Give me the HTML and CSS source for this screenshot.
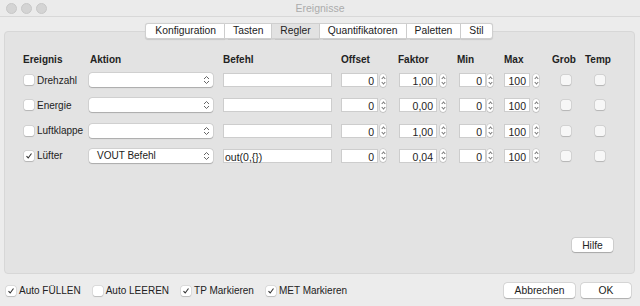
FILE: index.html
```html
<!DOCTYPE html>
<html lang="de">
<head>
    <meta charset="UTF-8">
    <title>Ereignisse</title>
    <link rel="stylesheet" href="styles.css">
</head>
<body>
    <!-- Title bar -->
    <div class="titlebar">
        <div class="lights">
            <span class="light"></span>
            <span class="light"></span>
            <span class="light"></span>
        </div>
        <div class="title">Ereignisse</div>
        <div></div>
    </div>

    <!-- Tabs -->
    <div class="tabs">
        <span class="tab">Konfiguration</span>
        <span class="tab">Tasten</span>
        <span class="tab active">Regler</span>
        <span class="tab">Quantifikatoren</span>
        <span class="tab">Paletten</span>
        <span class="tab">Stil</span>
    </div>

    <!-- Regler panel -->
    <div class="panel">
        <div class="grid head">
            <span>Ereignis</span>
            <span class="pl1">Aktion</span>
            <span>Befehl</span>
            <span>Offset</span>
            <span>Faktor</span>
            <span>Min</span>
            <span>Max</span>
            <span>Grob</span>
            <span>Temp</span>
        </div>

        <div class="grid row">
            <label class="event"><span class="check"></span>Drehzahl</label>
            <div class="combo"><span class="combo-text"></span><svg class="updown" width="7" height="10" viewBox="0 0 7 10"><polyline points="1,4 3.5,1.5 6,4"/><polyline points="1,6 3.5,8.5 6,6"/></svg></div>
            <div class="field text"></div>
            <div class="num"><div class="field w37">0</div><span class="stepper"></span></div>
            <div class="num pl1"><div class="field w38">1,00</div><span class="stepper"></span></div>
            <div class="num pl2"><div class="field w27">0</div><span class="stepper"></span></div>
            <div class="num"><div class="field w26">100</div><span class="stepper"></span></div>
            <span class="check plain grob"></span>
            <span class="check plain temp"></span>
        </div>

        <div class="grid row">
            <label class="event"><span class="check"></span>Energie</label>
            <div class="combo"><span class="combo-text"></span><svg class="updown" width="7" height="10" viewBox="0 0 7 10"><polyline points="1,4 3.5,1.5 6,4"/><polyline points="1,6 3.5,8.5 6,6"/></svg></div>
            <div class="field text"></div>
            <div class="num"><div class="field w37">0</div><span class="stepper"></span></div>
            <div class="num pl1"><div class="field w38">0,00</div><span class="stepper"></span></div>
            <div class="num pl2"><div class="field w27">0</div><span class="stepper"></span></div>
            <div class="num"><div class="field w26">100</div><span class="stepper"></span></div>
            <span class="check plain grob"></span>
            <span class="check plain temp"></span>
        </div>

        <div class="grid row">
            <label class="event"><span class="check"></span>Luftklappe</label>
            <div class="combo"><span class="combo-text"></span><svg class="updown" width="7" height="10" viewBox="0 0 7 10"><polyline points="1,4 3.5,1.5 6,4"/><polyline points="1,6 3.5,8.5 6,6"/></svg></div>
            <div class="field text"></div>
            <div class="num"><div class="field w37">0</div><span class="stepper"></span></div>
            <div class="num pl1"><div class="field w38">1,00</div><span class="stepper"></span></div>
            <div class="num pl2"><div class="field w27">0</div><span class="stepper"></span></div>
            <div class="num"><div class="field w26">100</div><span class="stepper"></span></div>
            <span class="check plain grob"></span>
            <span class="check plain temp"></span>
        </div>

        <div class="grid row">
            <label class="event"><span class="check on"><svg width="8" height="8" viewBox="0 0 8 8"><polyline points="1.5,4.2 3.2,6 6.5,1.5"/></svg></span>Lüfter</label>
            <div class="combo"><span class="combo-text">VOUT Befehl</span><svg class="updown" width="7" height="10" viewBox="0 0 7 10"><polyline points="1,4 3.5,1.5 6,4"/><polyline points="1,6 3.5,8.5 6,6"/></svg></div>
            <div class="field text">out(0,{})</div>
            <div class="num"><div class="field w37">0</div><span class="stepper"></span></div>
            <div class="num pl1"><div class="field w38">0,04</div><span class="stepper"></span></div>
            <div class="num pl2"><div class="field w27">0</div><span class="stepper"></span></div>
            <div class="num"><div class="field w26">100</div><span class="stepper"></span></div>
            <span class="check plain grob"></span>
            <span class="check plain temp"></span>
        </div>

        <div class="panel-foot">
            <button class="btn help">Hilfe</button>
        </div>
    </div>

    <!-- Footer -->
    <div class="footer">
        <div class="options">
            <label class="option"><span class="check on"><svg width="8" height="8" viewBox="0 0 8 8"><polyline points="1.5,4.2 3.2,6 6.5,1.5"/></svg></span>Auto FÜLLEN</label>
            <label class="option"><span class="check"></span>Auto LEEREN</label>
            <label class="option"><span class="check on"><svg width="8" height="8" viewBox="0 0 8 8"><polyline points="1.5,4.2 3.2,6 6.5,1.5"/></svg></span>TP Markieren</label>
            <label class="option"><span class="check on"><svg width="8" height="8" viewBox="0 0 8 8"><polyline points="1.5,4.2 3.2,6 6.5,1.5"/></svg></span>MET Markieren</label>
        </div>
        <div class="actions">
            <button class="btn cancel">Abbrechen</button>
            <button class="btn ok">OK</button>
        </div>
    </div>
</body>
</html>
```

FILE: styles.css
```css
body {
    margin: 0;
    width: 640px;
    height: 306px;
    overflow: hidden;
    background-color: #ececec;
    font-family: "Liberation Sans", Arial, sans-serif;
    font-size: 10px;
    color: #222;
}

/* Title bar */
.titlebar {
    height: 16px;
    display: grid;
    grid-template-columns: 1fr auto 1fr;
    align-items: center;
    background-color: #ebebeb;
    border-bottom: 1px solid #d8d8d8;
}

.lights {
    display: flex;
    gap: 4px;
    padding-left: 6px;
}

.light {
    width: 9px;
    height: 9px;
    border-radius: 50%;
    background-color: #d4d4d4;
    border: 0.5px solid #c8c8c8;
}

.title {
    color: #ababab;
    font-size: 10.5px;
}

/* Tabs */
.tabs {
    display: flex;
    justify-content: center;
    margin-top: 6px;
    position: relative;
    z-index: 1;
    padding-right: 2px;
}

.tab {
    height: 14px;
    line-height: 14px;
    padding: 0 8px;
    background-color: #fff;
    border: 0.5px solid #cfcfcf;
    border-left: none;
    font-size: 10.3px;
    box-shadow: 0 0.5px 1px rgba(0, 0, 0, 0.12);
}

.tab:first-child {
    border-left: 0.5px solid #cfcfcf;
    border-radius: 3px 0 0 3px;
    padding-left: 9px;
}

.tab:last-child {
    border-radius: 0 3px 3px 0;
}

.tab.active {
    background-color: #e2e2e2;
}

/* Panel */
.panel {
    height: 241px;
    margin: -8px 5px 0 4px;
    background-color: #e3e3e3;
    border: 1px solid #d7d7d7;
    border-radius: 4px;
    padding-left: 18px;
    display: flex;
    flex-direction: column;
}

.grid {
    display: grid;
    grid-template-columns: 66px 134px 118px 57px 59px 47px 48px 33px 30px;
    align-items: center;
}

.head {
    margin-top: 20px;
    height: 14px;
    margin-bottom: 7px;
    font-weight: bold;
}

.row {
    height: 14px;
    margin-bottom: 11.33px;
}

.pl1 {
    padding-left: 1px;
}

.pl2 {
    padding-left: 2px;
}

.event {
    display: flex;
    align-items: center;
    gap: 2px;
    padding-left: 1px;
}

.check {
    width: 10px;
    height: 10px;
    box-sizing: border-box;
    background-color: #fff;
    border-radius: 2px;
    box-shadow: 0 0 0 0.5px rgba(0, 0, 0, 0.12), 0 0.5px 1px rgba(0, 0, 0, 0.15);
    display: inline-flex;
    align-items: center;
    justify-content: center;
    flex-shrink: 0;
}

.event .check {
    margin-right: 1px;
}

.check svg polyline {
    fill: none;
    stroke: #333;
    stroke-width: 1.1;
}

.check.plain {
    justify-self: start;
    background-color: #f7f7f7;
}

.grob {
    margin-left: 9px;
}

.temp {
    margin-left: 10px;
}

.combo {
    width: 124px;
    height: 14px;
    box-sizing: border-box;
    background-color: #fff;
    border-radius: 3px;
    box-shadow: 0 0 0 0.5px rgba(0, 0, 0, 0.12), 0 0.5px 1px rgba(0, 0, 0, 0.2);
    display: flex;
    align-items: center;
    justify-content: space-between;
    padding: 0 3px 0 8px;
}

.updown polyline {
    fill: none;
    stroke: #555;
    stroke-width: 0.9;
}

.field {
    height: 14px;
    line-height: 14px;
    box-sizing: border-box;
    background-color: #fff;
    border: 0.5px solid #cdcdcd;
    padding: 0 3px;
    text-align: right;
    font-size: 10.5px;
}

.field.text {
    width: 109px;
    text-align: left;
    padding-left: 1px;
}

.num {
    display: flex;
    align-items: center;
    gap: 2px;
}

.w37 { width: 37px; }
.w38 { width: 38px; margin-right: 1px; }
.w27 { width: 27px; margin-right: -1px; }
.w26 { width: 26px; margin-right: 1px; }

.stepper {
    width: 6px;
    height: 13px;
    background-color: #fff;
    border-radius: 3px;
    box-shadow: 0 0 0 0.5px rgba(0, 0, 0, 0.15), 0 0.5px 1px rgba(0, 0, 0, 0.15);
    position: relative;
}

/* tiny up/down arrows inside the stepper */
.stepper::before,
.stepper::after {
    content: "";
    position: absolute;
    left: 1.5px;
    width: 2px;
    height: 2px;
    border-left: 0.8px solid #777;
    border-top: 0.8px solid #777;
}

.stepper::before {
    top: 3px;
    transform: rotate(45deg);
}

.stepper::after {
    bottom: 3px;
    transform: rotate(-135deg);
}

.panel-foot {
    margin-top: auto;
    display: flex;
    justify-content: flex-end;
    padding: 0 21px 21px 0;
}

.btn {
    font-family: "Liberation Sans", Arial, sans-serif;
    font-size: 10.3px;
    color: #222;
    background-color: #fff;
    border: none;
    border-radius: 3px;
    box-shadow: 0 0 0 0.5px rgba(0, 0, 0, 0.15), 0 0.5px 1px rgba(0, 0, 0, 0.2);
    padding: 0;
    height: 14px;
}

.help {
    width: 41px;
}

/* Footer */
.footer {
    height: 33px;
    display: flex;
    align-items: center;
    justify-content: space-between;
    padding: 0 9px 0 6px;
}

.options {
    display: flex;
    gap: 12px;
}

.option {
    display: flex;
    align-items: center;
    gap: 3px;
    font-size: 10px;
}

.actions {
    display: flex;
    gap: 6px;
}

.cancel {
    width: 71px;
    height: 15px;
}

.ok {
    width: 50px;
    height: 15px;
}
```
